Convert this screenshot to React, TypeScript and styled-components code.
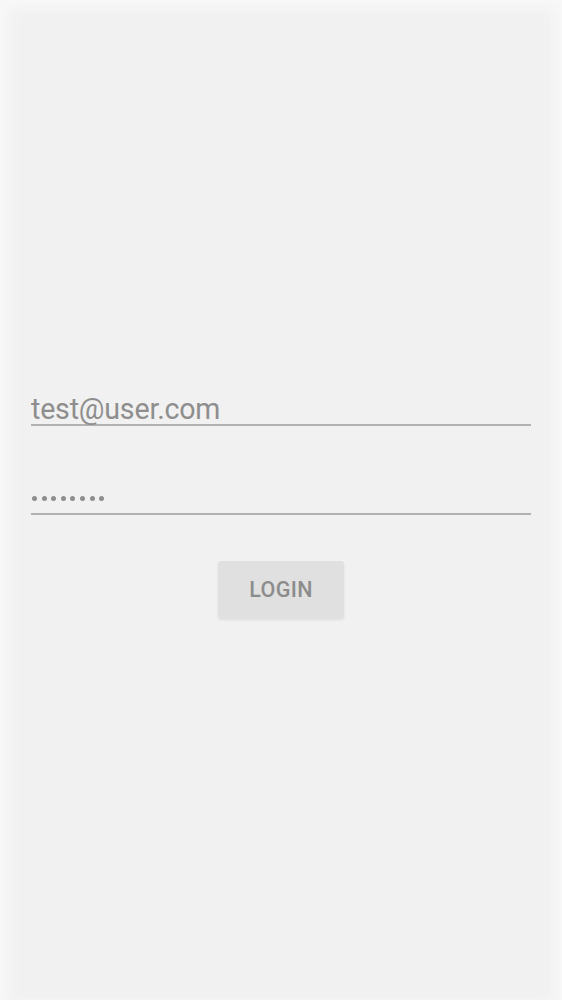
import React from "react";
import styled, { createGlobalStyle } from "styled-components";

const Global = createGlobalStyle`
  html, body { margin: 0; padding: 0; background: #f8f8f8; }
  body { font-family: Roboto, "Liberation Sans", sans-serif; }
`;

const Screen = styled.div`
  height: 1000px;
  box-sizing: border-box;
  background: #f1f1f1;
  box-shadow:
    inset 16px 0 14px -8px #f8f8f8,
    inset -16px 0 14px -8px #f8f8f8,
    inset 0 16px 14px -8px #f8f8f8;
  padding: 390px 31px 0;
  display: flex;
  flex-direction: column;
`;

const Field = styled.div<{ $gap: number }>`
  border-bottom: 2px solid #b2b2b2;
  height: 34px;
  margin-top: ${(p) => p.$gap}px;
  display: flex;
  align-items: flex-end;
`;

const Text = styled.span`
  font-size: 28.6px;
  line-height: 30px;
  color: #8e8e8e;
  letter-spacing: -0.2px;
`;

const Dots = styled.span`
  display: flex;
  gap: 4.6px;
  padding: 0 0 12px 1px;
`;

const Dot = styled.span`
  width: 5px;
  height: 5px;
  border-radius: 50%;
  background: #8e8e8e;
`;

const Login = styled.button`
  align-self: center;
  margin-top: 46px;
  width: 126px;
  height: 57px;
  border: none;
  border-radius: 3px;
  background: #dfe0df;
  color: #8c8c8c;
  font-family: Roboto, "Liberation Sans", sans-serif;
  font-weight: 500;
  font-size: 21.5px;
  letter-spacing: 0.4px;
  box-shadow: 0 2px 3px rgba(0, 0, 0, 0.08);
  padding: 0;
`;

export default function App() {
  return (
    <>
      <Global />
      <Screen>
        <Field $gap={0}>
          <Text>test@user.com</Text>
        </Field>
        <Field $gap={53}>
          <Dots>
            {Array.from({ length: 8 }).map((_, i) => (
              <Dot key={i} />
            ))}
          </Dots>
        </Field>
        <Login>LOGIN</Login>
      </Screen>
    </>
  );
}
